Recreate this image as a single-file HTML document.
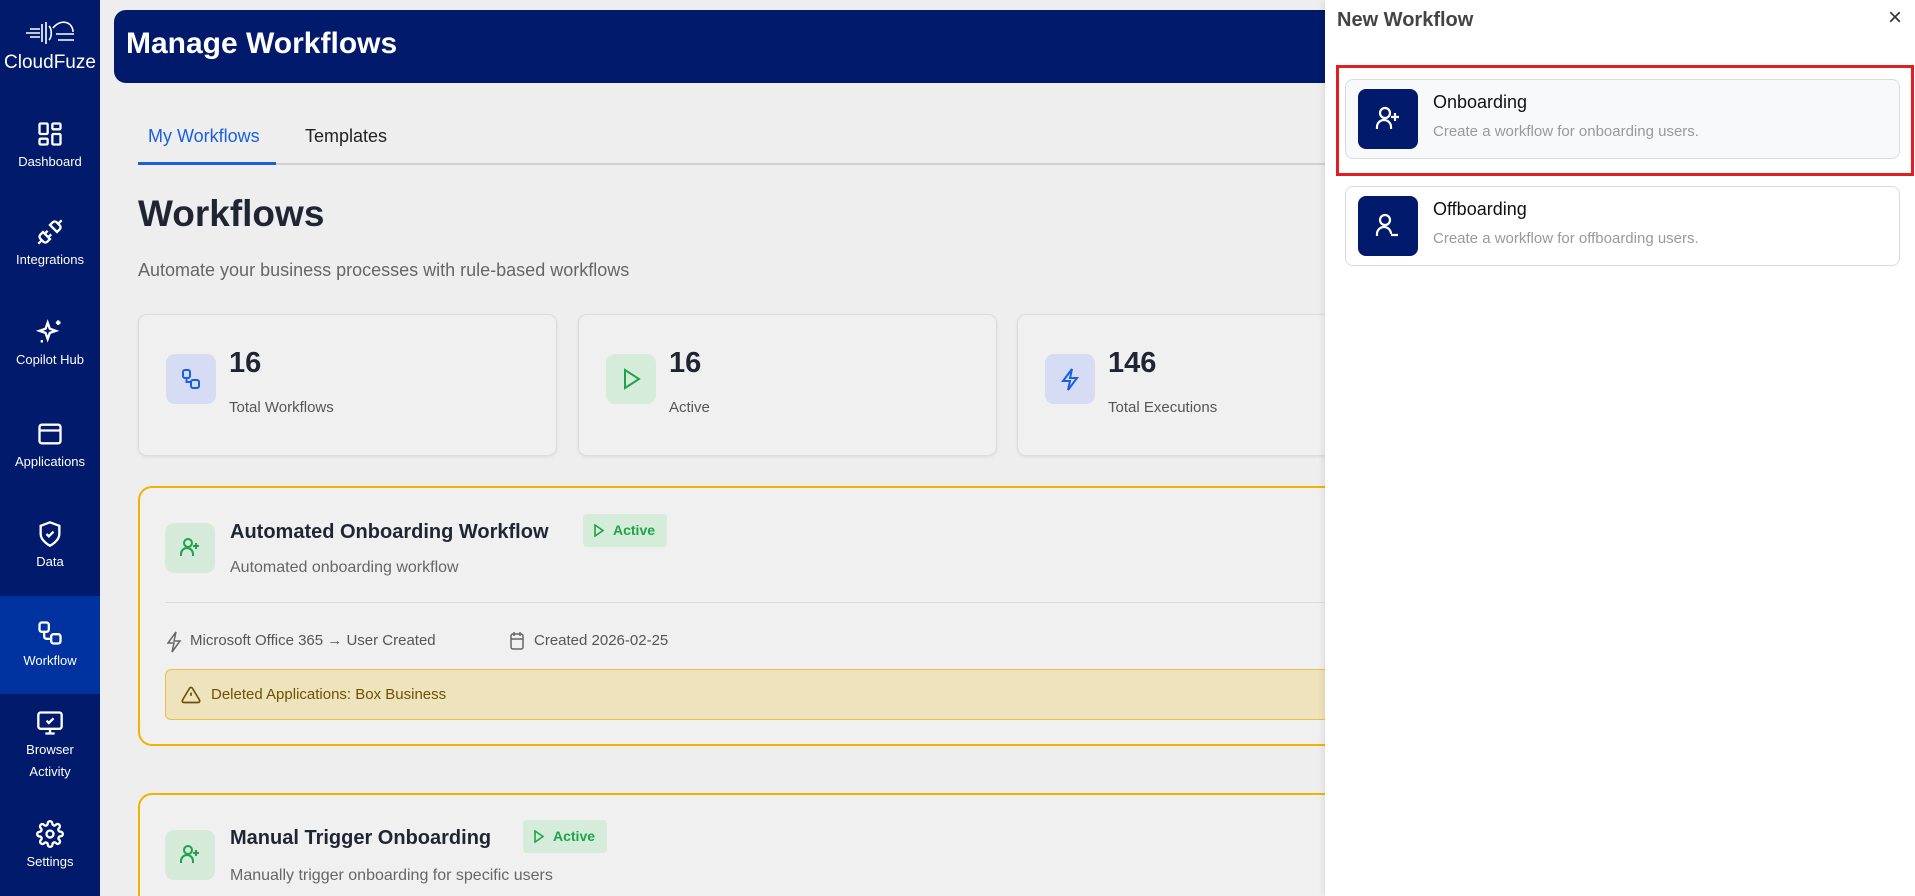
<!DOCTYPE html>
<html><head><meta charset="utf-8"><style>
*{box-sizing:border-box;margin:0;padding:0}
html,body{width:1915px;height:896px;overflow:hidden}
body{background:#eeeeee;font-family:"Liberation Sans",sans-serif;position:relative}
#wrap{position:absolute;left:0;top:0;width:1915px;height:896px;overflow:hidden}
.a{position:absolute}
.side{left:0;top:0;width:100px;height:896px;background:#011a6b}
.nav{position:absolute;left:0;width:100px;text-align:center;color:#fff;font-size:13px}
.nav svg{display:block;margin:0 auto 6px}
.hdr{left:114px;top:10px;width:1400px;height:73px;background:#011a6b;border-radius:12px}
.stat{background:#f0f0f0;border:1px solid #dcdcdc;border-radius:9px;box-shadow:0 1px 3px rgba(0,0,0,.08);top:314px;height:142px}
.ib{position:absolute;left:27px;top:39px;width:50px;height:50px;border-radius:9px}
.num{position:absolute;left:90px;top:32px;font-size:29px;font-weight:bold;color:#1f2533}
.lbl{position:absolute;left:90px;top:84px;font-size:15px;color:#555}
.card{left:138px;width:1760px;border:2px solid #f0b400;border-radius:14px;background:#f0f0f0}
.badge{position:absolute;height:33px;background:#d4ecd9;border-radius:4px;color:#1fa34a;font-weight:bold;font-size:14px;line-height:33px;padding-left:30px}
.meta{font-size:15px;color:#555}
.drawer{left:1325px;top:0;width:590px;height:896px;background:#fff;box-shadow:-2px 0 6px rgba(0,0,0,.08)}
.opt{position:absolute;left:20px;width:555px;height:80px;border:1px solid #d8dbe0;border-radius:8px}
.oi{position:absolute;left:12px;top:9px;width:60px;height:60px;background:#011a6b;border-radius:8px}
.ot{position:absolute;left:87px;top:12px;font-size:18px;color:#111}
.od{position:absolute;left:87px;top:43px;font-size:15px;color:#999}
</style></head><body><div id="wrap">
<div class="a side">
 <div class="nav" style="top:18px">
  <svg width="60" height="30" viewBox="0 0 60 30" fill="none" stroke="#fff" stroke-width="1.6"><path d="M6 15h14M10 11h10M10 19h10M22 6v18M26 4v22M29 8c3 3 3 11 0 14M33 10c8-10 20-6 20 4M36 16h18M38 22h16"/></svg>
  <div style="font-size:19px;margin-top:-2px">CloudFuze</div></div>
 <div class="nav" style="top:120px"><svg width="28" height="28" viewBox="0 0 24 24" fill="none" stroke="#fff" stroke-width="2"><rect x="3" y="3" width="7" height="9" rx="1"/><rect x="14" y="3" width="7" height="5" rx="1"/><rect x="14" y="12" width="7" height="9" rx="1"/><rect x="3" y="16" width="7" height="5" rx="1"/></svg>Dashboard</div>
 <div class="nav" style="top:218px"><svg width="28" height="28" viewBox="0 0 24 24" fill="none" stroke="#fff" stroke-width="2"><path d="M19 5l3-3M2 22l3-3M6.3 20.3a2.4 2.4 0 0 0 3.4 0L12 18l-6-6-2.3 2.3a2.4 2.4 0 0 0 0 3.4zM7.5 13.5L10 11M10.5 16.5L13 14M12 6l6 6 2.3-2.3a2.4 2.4 0 0 0 0-3.4l-2.6-2.6a2.4 2.4 0 0 0-3.4 0z"/></svg>Integrations</div>
 <div class="nav" style="top:318px"><svg width="28" height="28" viewBox="0 0 24 24" fill="none" stroke="#fff" stroke-width="2"><path d="M10 4l1.8 5.2L17 11l-5.2 1.8L10 18l-1.8-5.2L3 11l5.2-1.8zM19 2v4M17 4h4M5 19v2"/></svg>Copilot Hub</div>
 <div class="nav" style="top:420px"><svg width="28" height="28" viewBox="0 0 24 24" fill="none" stroke="#fff" stroke-width="2"><rect x="3" y="4" width="18" height="16" rx="2"/><path d="M3 9h18M6 6.5h.01M9 6.5h.01"/></svg>Applications</div>
 <div class="nav" style="top:520px"><svg width="28" height="28" viewBox="0 0 24 24" fill="none" stroke="#fff" stroke-width="2"><path d="M12 22s8-4 8-10V5l-8-3-8 3v7c0 6 8 10 8 10z"/><path d="M9 12l2 2 4-4"/></svg>Data</div>
 <div class="a" style="left:0;top:596px;width:100px;height:98px;background:#0033a0"></div>
 <div class="nav" style="top:619px"><svg width="28" height="28" viewBox="0 0 24 24" fill="none" stroke="#fff" stroke-width="2"><rect x="3" y="3" width="8" height="8" rx="2"/><rect x="13" y="13" width="8" height="8" rx="2"/><path d="M7 11v4a2 2 0 0 0 2 2h4"/></svg>Workflow</div>
 <div class="nav" style="top:709px;line-height:22px"><svg width="28" height="28" viewBox="0 0 24 24" fill="none" stroke="#fff" stroke-width="2" style="margin-bottom:2px"><rect x="2" y="3" width="20" height="14" rx="2"/><path d="M12 17v4M8 21h8M9 10l2 2 4-4"/></svg>Browser<br>Activity</div>
 <div class="nav" style="top:820px"><svg width="28" height="28" viewBox="0 0 24 24" fill="none" stroke="#fff" stroke-width="2"><circle cx="12" cy="12" r="3"/><path d="M19.4 15a1.7 1.7 0 0 0 .3 1.8l.1.1a2 2 0 1 1-2.8 2.8l-.1-.1a1.7 1.7 0 0 0-1.8-.3 1.7 1.7 0 0 0-1 1.5V21a2 2 0 1 1-4 0v-.1a1.7 1.7 0 0 0-1.1-1.5 1.7 1.7 0 0 0-1.8.3l-.1.1a2 2 0 1 1-2.8-2.8l.1-.1a1.7 1.7 0 0 0 .3-1.8 1.7 1.7 0 0 0-1.5-1H3a2 2 0 1 1 0-4h.1a1.7 1.7 0 0 0 1.5-1.1 1.7 1.7 0 0 0-.3-1.8l-.1-.1a2 2 0 1 1 2.8-2.8l.1.1a1.7 1.7 0 0 0 1.8.3H9a1.7 1.7 0 0 0 1-1.5V3a2 2 0 1 1 4 0v.1a1.7 1.7 0 0 0 1 1.5 1.7 1.7 0 0 0 1.8-.3l.1-.1a2 2 0 1 1 2.8 2.8l-.1.1a1.7 1.7 0 0 0-.3 1.8V9a1.7 1.7 0 0 0 1.5 1H21a2 2 0 1 1 0 4h-.1a1.7 1.7 0 0 0-1.5 1z"/></svg>Settings</div>
</div>

<div class="a hdr"><div class="a" style="left:12px;top:17px;color:#fff;font-size:30px;font-weight:600">Manage Workflows</div></div>

<div class="a" style="left:148px;top:126px;font-size:18px;color:#1a5fe0">My Workflows</div>
<div class="a" style="left:305px;top:126px;font-size:18px;color:#222">Templates</div>
<div class="a" style="left:138px;top:163px;width:1200px;height:2px;background:#cfcfcf"></div>
<div class="a" style="left:138px;top:162px;width:138px;height:3px;background:#1a5fe0"></div>

<div class="a" style="left:138px;top:193px;font-size:37px;font-weight:bold;color:#1f2533">Workflows</div>
<div class="a" style="left:138px;top:260px;font-size:18px;color:#666">Automate your business processes with rule-based workflows</div>

<div class="a stat" style="left:138px;width:419px"><div class="ib" style="background:#d5dcf3"><svg width="50" height="50" viewBox="0 0 50 50" fill="none" stroke="#1a5fe0" stroke-width="2"><rect x="17" y="16" width="7" height="8" rx="2"/><rect x="25" y="26" width="8" height="8" rx="2"/><path d="M20.5 24v4h4.5"/></svg></div><div class="num">16</div><div class="lbl">Total Workflows</div></div>
<div class="a stat" style="left:578px;width:419px"><div class="ib" style="background:#d5ecda"><svg width="50" height="50" viewBox="0 0 50 50" fill="none" stroke="#1fa34a" stroke-width="2"><path d="M19 16l14 9-14 9z"/></svg></div><div class="num">16</div><div class="lbl">Active</div></div>
<div class="a stat" style="left:1017px;width:419px"><div class="ib" style="background:#d5dcf3"><svg width="50" height="50" viewBox="0 0 50 50" fill="none" stroke="#1a5fe0" stroke-width="2"><path d="M27 15l-9 12h7l-2 9 9-12h-7z"/></svg></div><div class="num">146</div><div class="lbl">Total Executions</div></div>

<div class="a card" style="top:486px;height:260px">
 <div class="a" style="left:25px;top:35px;width:50px;height:50px;background:#d6ead9;border-radius:9px"><svg width="50" height="50" viewBox="0 0 50 50" fill="none" stroke="#1fa34a" stroke-width="2"><circle cx="23" cy="20" r="4"/><path d="M16 33v-2a6 6 0 0 1 12 0v2M31 20v6M28 23h6"/></svg></div>
 <div class="a" style="left:90px;top:33px;font-size:20px;font-weight:600;color:#1f2533">Automated Onboarding Workflow</div>
 <div class="badge" style="left:443px;top:26px;width:84px"><svg class="a" style="left:10px;top:10px" width="12" height="13" viewBox="0 0 12 13" fill="none" stroke="#1fa34a" stroke-width="1.6"><path d="M2 1l8 5.5L2 12z"/></svg>Active</div>
 <div class="a" style="left:90px;top:71px;font-size:16px;color:#666">Automated onboarding workflow</div>
 <div class="a" style="left:25px;top:114px;width:1740px;height:1px;background:#dcdcdc"></div>
 <svg class="a" style="left:25px;top:143px" width="18" height="22" viewBox="0 0 18 22" fill="none" stroke="#666" stroke-width="1.5"><path d="M11 1L3 12h6l-2 9 8-11H9z"/></svg>
 <div class="a meta" style="left:50px;top:144px">Microsoft Office 365 → User Created</div>
 <svg class="a" style="left:369px;top:143px" width="16" height="20" viewBox="0 0 16 20" fill="none" stroke="#666" stroke-width="1.5"><rect x="2" y="3" width="12" height="15" rx="2"/><path d="M5 1v4M11 1v4M2 8h12"/></svg>
 <div class="a meta" style="left:394px;top:144px">Created 2026-02-25</div>
 <div class="a" style="left:25px;top:181px;width:1740px;height:51px;background:#efe3bd;border:1px solid #e8c04a;border-radius:6px">
  <svg class="a" style="left:15px;top:15px" width="20" height="20" viewBox="0 0 24 24" fill="none" stroke="#6b5200" stroke-width="2"><path d="M10.3 3.9L1.8 18a2 2 0 0 0 1.7 3h17a2 2 0 0 0 1.7-3L13.7 3.9a2 2 0 0 0-3.4 0zM12 9v4M12 17h.01"/></svg>
  <div class="a" style="left:45px;top:16px;font-size:15px;color:#6b5200">Deleted Applications: Box Business</div></div>
</div>

<div class="a card" style="top:793px;height:140px">
 <div class="a" style="left:25px;top:35px;width:50px;height:50px;background:#d6ead9;border-radius:9px"><svg width="50" height="50" viewBox="0 0 50 50" fill="none" stroke="#1fa34a" stroke-width="2"><circle cx="23" cy="20" r="4"/><path d="M16 33v-2a6 6 0 0 1 12 0v2M31 20v6M28 23h6"/></svg></div>
 <div class="a" style="left:90px;top:32px;font-size:20px;font-weight:600;color:#1f2533">Manual Trigger Onboarding</div>
 <div class="badge" style="left:383px;top:25px;width:84px"><svg class="a" style="left:10px;top:10px" width="12" height="13" viewBox="0 0 12 13" fill="none" stroke="#1fa34a" stroke-width="1.6"><path d="M2 1l8 5.5L2 12z"/></svg>Active</div>
 <div class="a" style="left:90px;top:72px;font-size:16px;color:#666">Manually trigger onboarding for specific users</div>
</div>

<div class="a drawer">
 <div class="a" style="left:12px;top:9px;font-size:20px;font-weight:bold;color:#444">New Workflow</div>
 <div class="a" style="left:563px;top:4px;font-size:24px;color:#333">×</div>
 <div class="a" style="left:11px;top:65px;width:578px;height:111px;border:3px solid #e02020"></div>
 <div class="opt" style="top:79px;background:#f8f9fb"><div class="oi"><svg width="60" height="60" viewBox="0 0 60 60" fill="none" stroke="#fff" stroke-width="2.2"><circle cx="27" cy="24" r="5"/><path d="M19 40v-2a7 7 0 0 1 14 0v2M37 24v8M33 28h8"/></svg></div><div class="ot">Onboarding</div><div class="od">Create a workflow for onboarding users.</div></div>
 <div class="opt" style="top:186px;background:#fff"><div class="oi"><svg width="60" height="60" viewBox="0 0 60 60" fill="none" stroke="#fff" stroke-width="2.2"><circle cx="27" cy="24" r="5"/><path d="M19 40v-2a7 7 0 0 1 14 0M33 39h7"/></svg></div><div class="ot">Offboarding</div><div class="od">Create a workflow for offboarding users.</div></div>
</div>
</div></body></html>
